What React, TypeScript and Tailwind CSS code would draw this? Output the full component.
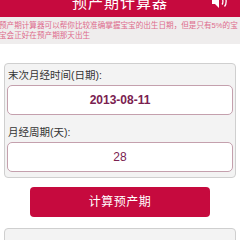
export default function App() {
  const font = { fontFamily: '"Liberation Sans", "Noto Sans CJK SC", sans-serif' }

  return (
    <div className="w-[240px] h-[240px] overflow-hidden bg-white" style={font}>
      {/* header */}
      <div className="relative h-[17px] bg-[#c60a3e] overflow-hidden">
        <div className="absolute left-0 right-0 top-[-5px] text-center text-white text-[15px] leading-[15px] tracking-[1px]">
          预产期计算器
        </div>
        <svg className="absolute left-[211px] top-[-6px]" width="18" height="15" viewBox="0 0 18 15">
          <path d="M1 5h3l4-4v13l-4-4H1z" fill="#fff" />
          <path d="M11 4.5c1.2 1.2 1.2 4.8 0 6" stroke="#fff" strokeWidth="1.3" fill="none" />
          <path d="M13.5 2.5c2.2 2.4 2.2 7.6 0 10" stroke="#fff" strokeWidth="1.3" fill="none" />
        </svg>
      </div>

      {/* intro */}
      <div className="h-[27px] bg-[#efeded] pt-[4px] text-[7.6px] leading-[9.5px] text-[#de6b8c] whitespace-nowrap">
        <div className="ml-[-1px]">预产期计算器可以帮你比较准确掌握宝宝的出生日期，但是只有5%的宝</div>
        <div className="ml-[-1px]">宝会正好在预产期那天出生</div>
      </div>

      {/* form card */}
      <div className="mx-[4px] mt-[19px] border border-[#cfcfcf] rounded-[4px] bg-[#f3f3f3] px-[2px] pt-[5px] pb-[5px]">
        <div className="pl-[1px] text-[10.5px] leading-[12px] text-[#333]">末次月经时间(日期):</div>
        <div className="mt-[4px] h-[30px] rounded-[5px] border border-[#c4a0ad] bg-white flex items-center justify-center text-[12px] font-bold text-[#7a2150]">
          2013-08-11
        </div>
        <div className="mt-[11px] pl-[1px] text-[10.5px] leading-[12px] text-[#333]">月经周期(天):</div>
        <div className="mt-[4px] h-[30px] rounded-[5px] border border-[#c4a0ad] bg-white flex items-center justify-center text-[12px] text-[#7a2150]">
          28
        </div>
      </div>

      {/* button */}
      <div className="flex justify-center mt-[9px]">
        <button className="w-[180px] h-[30px] rounded-[4px] bg-[#c60a3e] text-white text-[12px] tracking-[0.5px]">
          计算预产期
        </button>
      </div>

      {/* result card */}
      <div className="mx-[4px] mt-[11px] h-[40px] border border-[#cfcfcf] rounded-[4px] bg-[#f3f3f3]"></div>
    </div>
  )
}
